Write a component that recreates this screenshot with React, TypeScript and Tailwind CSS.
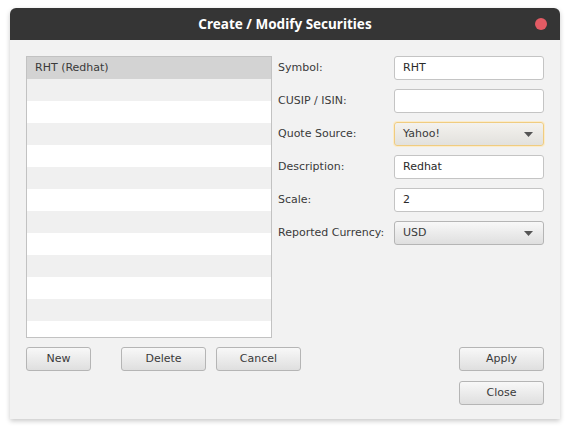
import React from 'react'

const font = { fontFamily: '"DejaVu Sans", sans-serif' }

const fields = [
  { label: 'Symbol:', value: 'RHT', kind: 'text' },
  { label: 'CUSIP / ISIN:', value: '', kind: 'text' },
  { label: 'Quote Source:', value: 'Yahoo!', kind: 'combo', focused: true },
  { label: 'Description:', value: 'Redhat', kind: 'text' },
  { label: 'Scale:', value: '2', kind: 'text' },
  { label: 'Reported Currency:', value: 'USD', kind: 'combo' },
]

function Button({ label, className = '' }: { label: string; className?: string }) {
  return (
    <button
      className={`h-[24px] rounded-[3px] border border-[#b5b5b5] bg-gradient-to-b from-[#f8f8f8] to-[#dfdfdf] text-[11px] text-[#3a3a3a] ${className}`}
    >
      {label}
    </button>
  )
}

function Arrow() {
  return (
    <svg width="9" height="5" viewBox="0 0 9 5" className="shrink-0">
      <path d="M0 0 L9 0 L4.5 5 Z" fill="#555" />
    </svg>
  )
}

export default function App() {
  const rows = Array.from({ length: 13 })

  return (
    <div className="w-[570px] h-[431px] bg-white overflow-hidden" style={font}>
      <div className="ml-[10px] mt-[8px] w-[550px] h-[411px] flex flex-col rounded-t-[6px] overflow-hidden shadow-[0_2px_5px_rgba(0,0,0,0.22)]">
        {/* Title bar */}
        <div className="relative h-[32px] shrink-0 bg-[#353535] flex items-center justify-center">
          <span
            className="text-[13.5px] font-bold text-white"
            style={{ fontFamily: '"Noto Sans", "Open Sans", sans-serif' }}
          >
            Create / Modify Securities
          </span>
          <span className="absolute right-[13px] top-[10px] w-[12px] h-[12px] rounded-full bg-[#e25b64]" />
        </div>

        {/* Body */}
        <div className="flex-1 bg-[#f2f2f2] px-4 pt-4 pb-[14px] flex flex-col">
          <div className="flex h-[282px]">
            {/* List */}
            <div className="w-[246px] h-full border border-[#c2c2c2] bg-white overflow-hidden">
              {rows.map((_, i) => (
                <div
                  key={i}
                  className={`h-[22px] flex items-center pl-[8px] text-[11px] text-[#3a3a3a] ${
                    i === 0 ? 'bg-[#d3d3d3]' : i % 2 === 1 ? 'bg-[#f0f0f0]' : 'bg-white'
                  }`}
                >
                  {i === 0 ? 'RHT (Redhat)' : ''}
                </div>
              ))}
            </div>

            {/* Form */}
            <div className="flex-1 flex flex-col gap-[9px]">
              {fields.map((f) => (
                <div key={f.label} className="flex items-center h-[24px]">
                  <div className="w-[122px] pl-[6px] text-[11px] text-[#3a3a3a]">{f.label}</div>
                  {f.kind === 'text' ? (
                    <div className="w-[150px] h-[24px] rounded-[3px] border border-[#c4c4c4] bg-white flex items-center pl-[8px] text-[11px] text-[#2a2a2a]">
                      {f.value}
                    </div>
                  ) : (
                    <div
                      className={`w-[150px] h-[24px] rounded-[3px] border flex items-center justify-between pl-[8px] pr-[10px] text-[11px] text-[#3a3a3a] ${
                        f.focused
                          ? 'border-[#f0cc80] bg-gradient-to-b from-[#f4f2ee] to-[#e2e1dd] shadow-[0_0_0_1px_#fbeccb]'
                          : 'border-[#b5b5b5] bg-gradient-to-b from-[#f8f8f8] to-[#dfdfdf]'
                      }`}
                    >
                      <span>{f.value}</span>
                      <Arrow />
                    </div>
                  )}
                </div>
              ))}
            </div>
          </div>

          {/* Buttons */}
          <div className="mt-[9px] flex justify-between">
            <div className="flex">
              <Button label="New" className="w-[65px]" />
              <Button label="Delete" className="w-[85px] ml-[30px]" />
              <Button label="Cancel" className="w-[85px] ml-[10px]" />
            </div>
            <div className="flex flex-col gap-[10px]">
              <Button label="Apply" className="w-[85px]" />
              <Button label="Close" className="w-[85px]" />
            </div>
          </div>
        </div>
      </div>
    </div>
  )
}
